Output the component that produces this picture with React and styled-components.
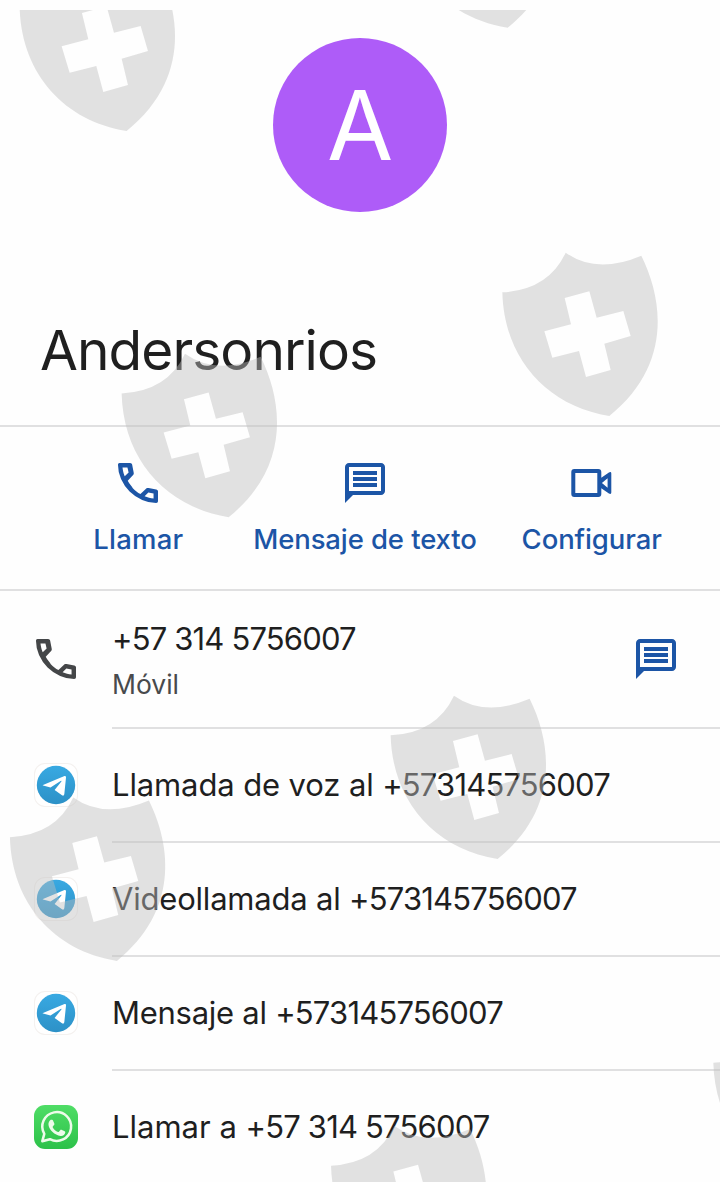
import React from "react";
import styled, { createGlobalStyle } from "styled-components";

const GlobalStyle = createGlobalStyle`
  * { box-sizing: border-box; }
  body { margin: 0; background: #fefefe; }
`;

const Screen = styled.main`
  position: relative;
  display: flex;
  flex-direction: column;
  width: 720px;
  height: 1182px;
  overflow: hidden;
  background: #fefefe;
  color: #1f1f1f;
  font-family: Inter, Roboto, sans-serif;
`;

const Header = styled.header`
  display: flex;
  flex: none;
  flex-direction: column;
  height: 427px;
  padding: 38px 40px 0;
  border-bottom: 2px solid #e0e0e1;
`;

const Avatar = styled.div`
  display: flex;
  align-items: center;
  justify-content: center;
  align-self: center;
  width: 174px;
  height: 174px;
  border-radius: 50%;
  background: #ae5cf8;
  color: #fff;
  font-size: 96px;
  line-height: 174px;
`;

const Name = styled.h1`
  margin: 105px 0 0;
  font-size: 55px;
  font-weight: 400;
  line-height: 66px;
  letter-spacing: -0.93px;
`;

const Actions = styled.nav`
  display: grid;
  flex: none;
  grid-template-columns: repeat(3, 1fr);
  height: 164px;
  padding: 32px 15px 0 25px;
  border-bottom: 2px solid #e0e0e1;
  color: #1c55a6;
`;

const Action = styled.div`
  display: flex;
  flex-direction: column;
  align-items: center;
  gap: 15px;
`;

const Glyph = styled.svg`
  display: block;
  width: 48px;
  height: 48px;
  fill: currentColor;
`;

const ActionLabel = styled.span`
  font-size: 27.5px;
  font-weight: 460;
  line-height: 34px;
  white-space: nowrap;
  letter-spacing: ${(p) => p.$tracking || 0}px;
`;

const Row = styled.section`
  display: flex;
  flex: none;
  height: ${(p) => (p.$tall ? 138 : 114)}px;
`;

const RowIcon = styled.div`
  display: flex;
  align-items: center;
  justify-content: center;
  width: 112px;
  height: calc(100% - 2px);
  color: #444648;
`;

const RowBody = styled.div`
  display: flex;
  flex: 1;
  align-items: center;
  justify-content: space-between;
  padding-right: 40px;
  border-bottom: 2px solid #e0e0e1;
`;

const RowText = styled.div`
  display: flex;
  flex-direction: column;
  gap: 8px;
  padding-top: 2px;
`;

const Primary = styled.div`
  font-size: 31px;
  line-height: 40px;
  white-space: pre;
`;

const Tracked = styled.span`
  letter-spacing: ${(p) => p.$tracking || 0}px;
`;

const Secondary = styled.div`
  font-size: 26.5px;
  line-height: 34px;
  color: #484a4c;
`;

const MessageButton = styled.div`
  display: flex;
  color: #1c55a6;
`;

const AppTile = styled.div`
  display: flex;
  align-items: center;
  justify-content: center;
  width: 44px;
  height: 44px;
  border-radius: 11px;
  background: ${(p) => (p.$green ? "linear-gradient(#4fdd66, #2cc149)" : "#fff")};
  box-shadow: ${(p) => (p.$green ? "none" : "inset 0 0 0 1px #f4f1ef")};
`;

const TileArt = styled.svg`
  display: block;
  width: 44px;
  height: 44px;
`;

const Watermark = styled.svg`
  position: absolute;
  inset: 10px 0 0;
  width: 720px;
  height: 1172px;
  pointer-events: none;
`;

const PhoneGlyph = () => (
  <Glyph viewBox="48 -912 864 864">
    <path d="M806-120q-128 0-251-54.500T329-329Q229-429 174.500-553T120-806q0-14 7-24t21-10h190q14 0 24 9t13 23l28 142q2 14-.500 25.500T392-622l-97 100q20 38 47.500 72.500T387-386q31 31 65 57.500t72 48.500l100-96q9-9 21.500-13.500T671-391l137 28q14 4 23 14.500t9 23.500v171q0 18-9 26t-25 8ZM241-600l70-70-21-90h-89q5 41 14 81t26 79Zm358 358q39 17 79.500 27t81.500 13v-88l-94-19-67 67Z" />
  </Glyph>
);

const MessageGlyph = () => (
  <Glyph viewBox="0 0 24 24">
    <path d="M4 2h16c1.100 0 2 .9 2 2v12c0 1.100-.9 2-2 2H6l-4 4V4c0-1.100.9-2 2-2zm0 2v12h16V4H4zm2 1.950h12v2H6v-2zm0 3h12v2H6v-2zm0 3h12v2H6v-2z" />
  </Glyph>
);

const VideoGlyph = () => (
  <Glyph viewBox="0.700 0 48 48">
    <path
      fillRule="evenodd"
      d="M7 10h24a3 3 0 0 1 3 3v5.800l7.600-5.300q2.400-1.200 2.400 1v19q0 2.200-2.400 1l-7.600-5.300V35a3 3 0 0 1-3 3H7a3 3 0 0 1-3-3V13a3 3 0 0 1 3-3zM8 14v20h22V14zm26.600 10 5.700 4.800V19.200z"
    />
  </Glyph>
);

const TelegramIcon = () => (
  <AppTile>
    <TileArt viewBox="0.500 0.500 44 44">
      <defs>
        <linearGradient id="sky" x1="0" y1="0" x2="0" y2="1">
          <stop offset="0" stopColor="#38a9e2" />
          <stop offset="1" stopColor="#2d91c7" />
        </linearGradient>
      </defs>
      <circle cx="22.500" cy="22.500" r="19.200" fill="url(#sky)" />
      <path
        fill="#fff"
        d="M9.500 22.400 31 13.500q1.800-.4 1.500 1.500l-1.700 16.800q-.5 2-2.300 1l-7.400-5.300 6.800-8.400q.5-1.200-.8-.6l-10.100 6.500-7.400-2q-.9-.3-.1-.6z"
      />
    </TileArt>
  </AppTile>
);

const WhatsAppIcon = () => (
  <AppTile $green>
    <TileArt viewBox="0.500 0.500 44 44">
      <path
        d="M8.800 36.700l2-7.400a14.400 14.400 0 1 1 5.600 5.400z"
        fill="none"
        stroke="#edfbea"
        strokeWidth="2.500"
        strokeLinejoin="round"
      />
      <path
        fill="#edfbea"
        d="M17.200 15.200h1.300q.7 0 1 .7l1.400 3.300q.2.600-.2 1.100l-1.400 1.700q-.3.400 0 .9c1.200 2 2.900 3.500 5.200 4.500q.5.200.9-.2l1.500-1.800q.4-.5 1-.2l3.300 1.600q.7.300.6 1c-.2 2.500-2.400 3.800-4.700 3.600-6-.8-11.300-5.700-12.100-10.900-.3-2.200.700-4.400 2.200-5.300z"
      />
    </TileArt>
  </AppTile>
);

const shieldOrigins = [
  [-2.700, -45],
  [378.300, -148.300],
  [480, 240],
  [99.300, 341.200],
  [368.300, 683],
  [-12.400, 784.900],
  [308.700, 1113.400],
  [691, 1010.400],
];

const Shields = () => (
  <Watermark viewBox="0 10 720 1172" aria-hidden="true">
    {shieldOrigins.map(([x, y]) => (
      <path
        key={`${x}:${y}`}
        transform={`translate(${x} ${y}) scale(.33333)`}
        fill="#bebebe"
        fillOpacity=".45"
        fillRule="evenodd"
        d="M67 157Q205 150 257 38Q350 104 484 47C553 186 572 380 388 528C200 498 72 355 67 157ZM254 174L273 253L193 274L217 353L297 333L318 411L392 390L373 311L452 288L430 213L350 233L328 154Z"
      />
    ))}
  </Watermark>
);

const contactRows = [
  { text: "Llamada de voz al ", number: "+573145756007", tracking: -0.12, Icon: TelegramIcon },
  { text: "Videollamada al ", number: "+573145756007", tracking: -0.2, Icon: TelegramIcon },
  { text: "Mensaje al ", number: "+573145756007", tracking: -0.27, Icon: TelegramIcon },
  { text: "Llamar a ", number: "+57 314 5756007", tracking: 0, Icon: WhatsAppIcon },
];

export default function App() {
  return (
    <Screen>
      <GlobalStyle />
      <Header>
        <Avatar>A</Avatar>
        <Name>Andersonrios</Name>
      </Header>
      <Actions>
        <Action>
          <PhoneGlyph />
          <ActionLabel $tracking={0.2}>Llamar</ActionLabel>
        </Action>
        <Action>
          <MessageGlyph />
          <ActionLabel $tracking={-0.1}>Mensaje de texto</ActionLabel>
        </Action>
        <Action>
          <VideoGlyph />
          <ActionLabel $tracking={-0.1}>Configurar</ActionLabel>
        </Action>
      </Actions>
      <Row $tall>
        <RowIcon>
          <PhoneGlyph />
        </RowIcon>
        <RowBody>
          <RowText>
            <Primary>
              <Tracked $tracking={-0.84}>+57 314 5756007</Tracked>
            </Primary>
            <Secondary>Móvil</Secondary>
          </RowText>
          <MessageButton>
            <MessageGlyph />
          </MessageButton>
        </RowBody>
      </Row>
      {contactRows.map(({ text, number, tracking, Icon }) => (
        <Row key={text}>
          <RowIcon>
            <Icon />
          </RowIcon>
          <RowBody>
            <Primary>
              <Tracked $tracking={tracking}>{text}</Tracked>
              <Tracked $tracking={-0.82}>{number}</Tracked>
            </Primary>
          </RowBody>
        </Row>
      ))}
      <Shields />
    </Screen>
  );
}
